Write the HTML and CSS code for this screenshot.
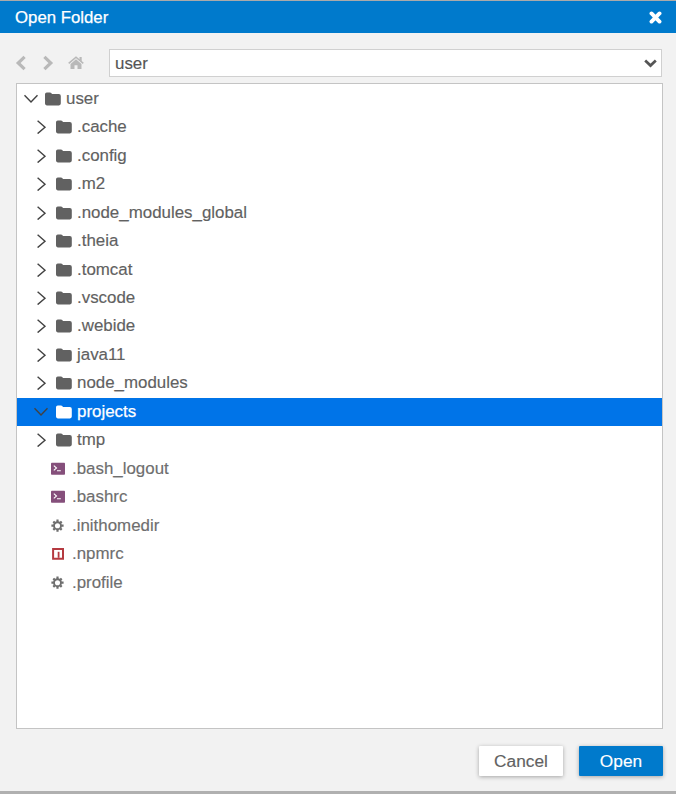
FILE: index.html
```
<!DOCTYPE html>
<html lang="en">
<head>
<meta charset="utf-8">
<title>Open Folder</title>
<link rel="stylesheet" href="styles.css">
</head>
<body>
<svg class="defs" aria-hidden="true">
  <symbol id="right" viewBox="0 0 14 14"><path d="M3.6 .8 11 7.2 3.6 13.6" fill="none" stroke="currentColor" stroke-width="1.4"/></symbol>
  <symbol id="down" viewBox="0 0 14 14"><path d="M.5 3.2 7 10 13.5 3.2" fill="none" stroke="currentColor" stroke-width="1.4"/></symbol>
  <symbol id="folder" viewBox="0 0 16 14"><path d="M0 2.2Q0 .4 1.8.4H5Q6.7.4 6.9 2.1H13.8Q15.8 2.1 15.8 4V11.6Q15.8 13.4 14 13.4H1.8Q0 13.4 0 11.6Z" fill="currentColor"/></symbol>
  <symbol id="shell" viewBox="0 0 14 14"><rect y=".7" width="14" height="12" rx=".8" fill="#854f7b"/><path d="M2.8 3.7 5.5 6 2.8 8.3M6 8.7H9.8" fill="none" stroke="#fff" stroke-width="1.1"/></symbol>
  <symbol id="gear" viewBox="0 0 14 14"><circle cx="6.5" cy="6.7" r="3.5" fill="none" stroke="currentColor" stroke-width="1.9"/><path d="M6.5 .6V3M6.5 10.4v2.4M.4 6.7H2.8M10.2 6.7h2.4M2.3 2.5 3.7 3.9M9.3 9.5l1.4 1.4M2.3 10.9 3.7 9.5M9.3 3.9l1.4-1.4" stroke="currentColor" stroke-width="2.2"/></symbol>
  <symbol id="npm" viewBox="0 0 14 14"><path d="M2.1 1.9H12V11.8H2.1Z" fill="none" stroke="#b53a40" stroke-width="2"/><path d="M7.6 4.8V10.8" stroke="#b53a40" stroke-width="1.8"/></symbol>
</svg>
<div class="dialog">
  <header class="title"><span>Open Folder</span>
    <svg class="close" viewBox="0 0 12 12"><path d="M2.3 2.3 9.7 9.7M9.7 2.3 2.3 9.7" stroke="#fff" stroke-width="3.6" stroke-linecap="round"/></svg>
  </header>
  <nav class="nav">
    <svg class="back" viewBox="0 0 12 16"><path d="M9.6 1.8 3.2 8l6.4 6.2" fill="none" stroke="currentColor" stroke-width="3.2"/></svg>
    <svg class="forward" viewBox="0 0 12 16"><path d="M2.4 1.8 8.8 8l-6.4 6.2" fill="none" stroke="currentColor" stroke-width="3.2"/></svg>
    <svg class="home" viewBox="0 0 16 14"><path d="M.7 7.3 8 1.2l7.3 6.1" fill="none" stroke="currentColor" stroke-width="1.6"/><path d="M11.5 1H13.7V5.5L11.5 3.8ZM8 3.3 13.5 8V13H9.5V9.2H6.5V13H2.5V8Z" fill="currentColor"/></svg>
    <div class="location"><span>user</span><svg class="caret" viewBox="0 0 12 8"><path d="M1.1 1.3 6 5.9l4.9-4.6" fill="none" stroke="#555" stroke-width="2.5"/></svg></div>
  </nav>
  <main class="tree">
    <div class="row root"><svg class="arrow"><use href="#down"/></svg><svg class="folder"><use href="#folder"/></svg><span>user</span></div>
    <div class="row"><svg class="arrow"><use href="#right"/></svg><svg class="folder"><use href="#folder"/></svg><span>.cache</span></div>
    <div class="row"><svg class="arrow"><use href="#right"/></svg><svg class="folder"><use href="#folder"/></svg><span>.config</span></div>
    <div class="row"><svg class="arrow"><use href="#right"/></svg><svg class="folder"><use href="#folder"/></svg><span>.m2</span></div>
    <div class="row"><svg class="arrow"><use href="#right"/></svg><svg class="folder"><use href="#folder"/></svg><span>.node_modules_global</span></div>
    <div class="row"><svg class="arrow"><use href="#right"/></svg><svg class="folder"><use href="#folder"/></svg><span>.theia</span></div>
    <div class="row"><svg class="arrow"><use href="#right"/></svg><svg class="folder"><use href="#folder"/></svg><span>.tomcat</span></div>
    <div class="row"><svg class="arrow"><use href="#right"/></svg><svg class="folder"><use href="#folder"/></svg><span>.vscode</span></div>
    <div class="row"><svg class="arrow"><use href="#right"/></svg><svg class="folder"><use href="#folder"/></svg><span>.webide</span></div>
    <div class="row"><svg class="arrow"><use href="#right"/></svg><svg class="folder"><use href="#folder"/></svg><span>java11</span></div>
    <div class="row"><svg class="arrow"><use href="#right"/></svg><svg class="folder"><use href="#folder"/></svg><span>node_modules</span></div>
    <div class="row selected"><svg class="arrow"><use href="#down"/></svg><svg class="folder"><use href="#folder"/></svg><span>projects</span></div>
    <div class="row"><svg class="arrow"><use href="#right"/></svg><svg class="folder"><use href="#folder"/></svg><span>tmp</span></div>
    <div class="row file"><svg class="type"><use href="#shell"/></svg><span>.bash_logout</span></div>
    <div class="row file"><svg class="type"><use href="#shell"/></svg><span>.bashrc</span></div>
    <div class="row file"><svg class="type"><use href="#gear"/></svg><span>.inithomedir</span></div>
    <div class="row file"><svg class="type"><use href="#npm"/></svg><span>.npmrc</span></div>
    <div class="row file"><svg class="type"><use href="#gear"/></svg><span>.profile</span></div>
  </main>
  <footer class="actions"><button>Cancel</button><button class="primary">Open</button></footer>
</div>
</body>
</html>
```
FILE: styles.css
```
* { box-sizing: border-box; }
body { margin: 0; font: 16.9px/20px "Liberation Sans", Arial, sans-serif; color: #616161; -webkit-text-stroke: .15px currentColor; }
svg { flex: none; display: block; }
.defs { position: absolute; width: 0; height: 0; }
.dialog { height: 794px; display: flex; flex-direction: column; background: #f2f2f2; border-top: 1px solid #aaa; border-bottom: 3px solid #b0b0b0; }
.title { height: 32px; display: flex; align-items: center; justify-content: space-between; padding: 1px 14px 0 15px; background: #007acc; color: #fff; font-size: 16.8px; -webkit-text-stroke: .25px #fff; }
.close { width: 13px; height: 13px; }
.nav { height: 28px; margin: 16px 14px 6px 15px; display: flex; align-items: center; color: #b9b9b9; }
.back, .forward { width: 12px; height: 16px; }
.forward { margin-left: 15px; }
.home { width: 16px; height: 14px; margin-left: 14px; }
.location { flex: 1; height: 28px; margin-left: 25px; padding: 1px 4px 0 5px; display: flex; align-items: center; justify-content: space-between; background: #fff; border: 1.5px solid #d0d0d0; color: #555; }
.caret { width: 13px; height: 9px; margin-bottom: 1px; }
.tree { height: 646px; margin: 0 13px 0 16px; padding-top: .5px; background: #fff; border: 1px solid #c4c4c4; }
.row { height: 28.48px; padding-left: 17px; display: flex; align-items: center; white-space: nowrap; }
.root { padding-left: 7px; }
.arrow { width: 14px; height: 14px; color: #424242; }
.folder { width: 16px; height: 14px; margin: 0 5px 0 8px; }
.root .folder { margin-left: 7px; }
.file { padding-left: 34px; color: #6e6e6e; }
.type { width: 14px; height: 14px; margin-right: 7px; }
.selected { background: #0074e8; color: #fff; -webkit-text-stroke: .25px #fff; }
.selected .arrow { color: #424242; -webkit-text-stroke: 0; }
.actions { display: flex; justify-content: flex-end; gap: 16px; padding: 17px 13px 0; }
button { width: 84px; height: 30px; padding: 0; border: 0; border-radius: 1px; background: #fff; color: #616161; font: inherit; font-size: 17.3px; box-shadow: 0 1px 4px rgba(0,0,0,.32); }
.primary { background: #007acc; color: #fff; }
```
